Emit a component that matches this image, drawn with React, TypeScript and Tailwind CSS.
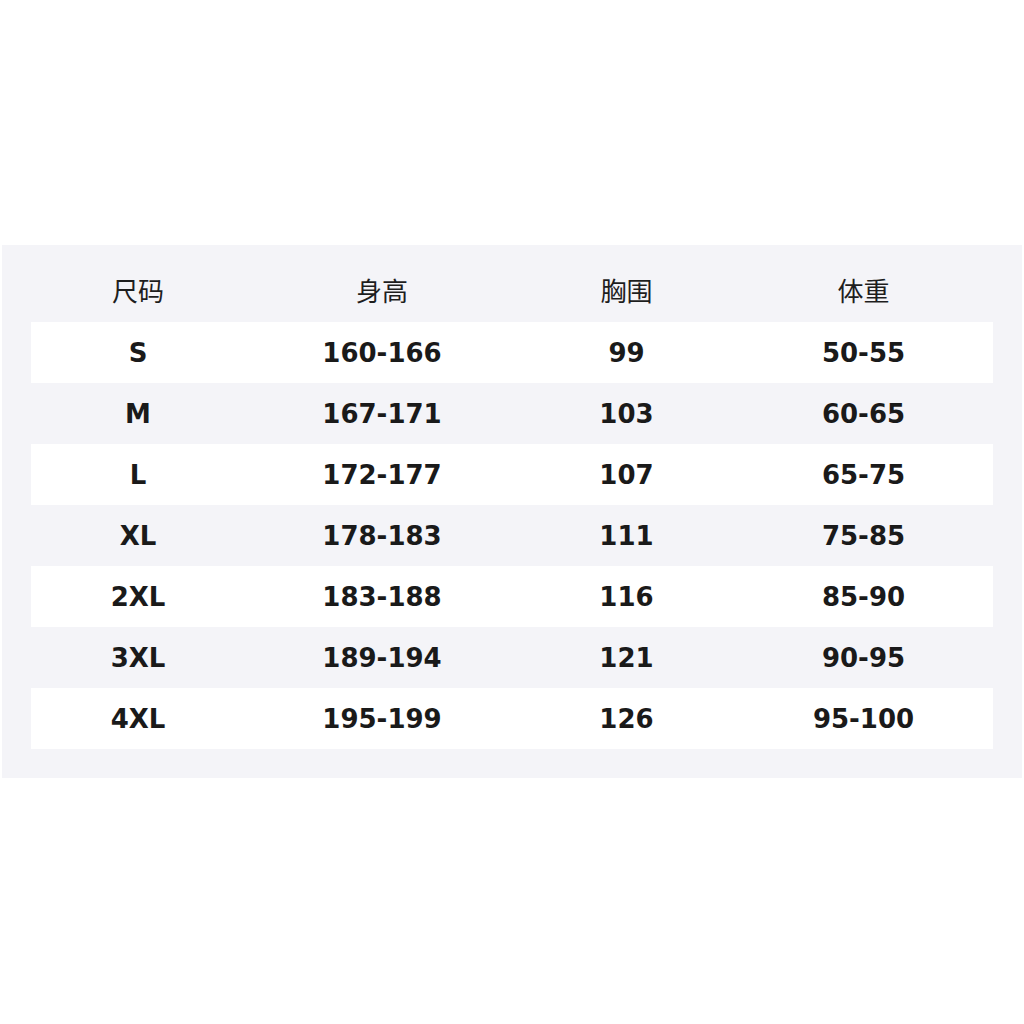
import React from "react";

const rows = [
  ["S", "160-166", "99", "50-55"],
  ["M", "167-171", "103", "60-65"],
  ["L", "172-177", "107", "65-75"],
  ["XL", "178-183", "111", "75-85"],
  ["2XL", "183-188", "116", "85-90"],
  ["3XL", "189-194", "121", "90-95"],
  ["4XL", "195-199", "126", "95-100"],
];

export default function App() {
  return (
    <div className="w-[1024px] h-[1024px] bg-white pt-[245px] pl-[2px] pr-[2px]">
      <div className="bg-[#f4f4f8] pt-[16px] pb-[29px] px-[29px]">
        <div
          className="grid grid-cols-[214px_274px_215px_1fr] h-[61px] pb-[4px] items-center text-[26px] text-[#1e1e1e]"
          style={{ fontFamily: '"Noto Sans CJK SC", "DejaVu Sans", sans-serif' }}
        >
          <div className="text-center">尺码</div>
          <div className="text-center">身高</div>
          <div className="text-center">胸围</div>
          <div className="text-center">体重</div>
        </div>
        {rows.map((r, i) => (
          <div
            key={i}
            className={`grid grid-cols-[214px_274px_215px_1fr] h-[61px] pt-[2px] items-center text-[26px] font-bold text-[#1a1a1a] ${i % 2 === 0 ? "bg-white" : ""}`}
            style={{ fontFamily: '"DejaVu Sans", sans-serif' }}
          >
            {r.map((c, j) => (
              <div key={j} className="text-center">{c}</div>
            ))}
          </div>
        ))}
      </div>
    </div>
  );
}
